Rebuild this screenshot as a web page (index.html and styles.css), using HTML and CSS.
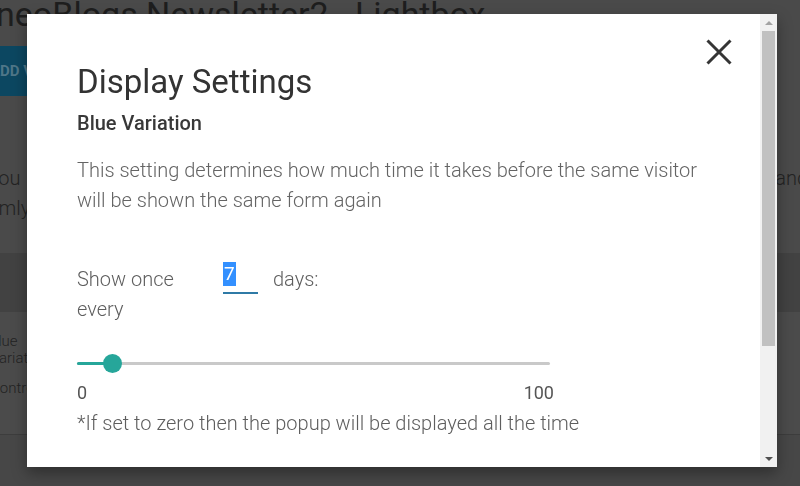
FILE: index.html
```html
<!DOCTYPE html>
<html>
<head>
<meta charset="utf-8">
<link rel="stylesheet" href="styles.css">
</head>
<body>
<div class="page">
  <header class="bg-header">
    <h1 class="bg-title">neoBlogs Newsletter2 - Lightbox</h1>
  </header>
  <div class="bg-toolbar">
    <span class="bg-button">ADD VARIATION</span>
  </div>
  <section class="bg-section">
    <p class="bg-line"><span class="bg-left">you</span><span class="bg-right">and</span></p>
    <p class="bg-line"><span class="bg-left2">firmly</span></p>
  </section>
  <div class="bg-thead"></div>
  <div class="bg-rows">
    <div class="bg-row"><span class="bg-cell c1">Blue</span><span class="bg-cell c2">Variation</span></div>
    <div class="bg-row r2"><span class="bg-cell c3">Control</span></div>
  </div>
</div>

<div class="modal">
  <div class="modal-content">
    <button class="close" aria-label="Close">
      <svg width="26" height="26" viewBox="0 0 26 26"><path d="M1.5 1.5 L24.5 24.5 M24.5 1.5 L1.5 24.5" stroke="#353535" stroke-width="3" fill="none"/></svg>
    </button>
    <h2 class="title">Display Settings</h2>
    <h4 class="subtitle">Blue Variation</h4>
    <p class="desc">This setting determines how much time it takes before the same visitor will be shown the same form again</p>
    <div class="freq-row">
      <label class="freq-label">Show once every</label>
      <div class="freq-input"><span class="sel">7</span></div>
      <span class="freq-unit">days:</span>
    </div>
    <div class="slider">
      <div class="track">
        <div class="fill" style="width:36px"></div>
        <div class="thumb"></div>
      </div>
    </div>
    <div class="range-labels"><span>0</span><span>100</span></div>
    <p class="note">*If set to zero then the popup will be displayed all the time</p>
  </div>
  <div class="scrollbar">
    <div class="sb-btn"><span class="arrow-up"></span></div>
    <div class="sb-thumb"></div>
    <div class="sb-space"></div>
    <div class="sb-btn"><span class="arrow-down"></span></div>
  </div>
</div>
</body>
</html>
```

FILE: styles.css
```css
html, body {
  margin: 0;
  padding: 0;
}
body {
  width: 800px;
  height: 486px;
  overflow: hidden;
  background: #474747;
  font-family: Roboto, "Noto Sans", sans-serif;
}
.page {
  width: 800px;
}
.bg-header {
  height: 46px;
  background: #4a4a4a;
  overflow: hidden;
}
.bg-title {
  margin: -3px 0 0 -4px;
  font-size: 34px;
  line-height: 34px;
  font-weight: 400;
  color: #1e1e1e;
  white-space: nowrap;
}
.bg-toolbar {
  height: 50px;
  background: #4a4a4a;
  overflow: hidden;
}
.bg-button {
  display: inline-flex;
  align-items: center;
  height: 50px;
  margin-left: -30px;
  padding: 0 20px;
  background: #0c4761;
  color: #4f7688;
  font-size: 15px;
  font-weight: 700;
}
.bg-section {
  height: 157px;
  box-sizing: border-box;
  padding-top: 67px;
  background: #4a4a4a;
  overflow: hidden;
}
.bg-line {
  margin: 0;
  display: flex;
  justify-content: space-between;
  font-size: 20px;
  font-weight: 300;
  line-height: 30px;
  color: #232323;
}
.bg-left { margin-left: -11px; }
.bg-left2 { margin-left: -19px; }
.bg-right { margin-right: -8px; }
.bg-thead {
  height: 59px;
  background: #424242;
}
.bg-rows {
  height: 123px;
  box-sizing: border-box;
  background: #4b4b4b;
  border-bottom: 1px solid #3d3d3d;
  padding-top: 21px;
  overflow: hidden;
}
.bg-row {
  display: flex;
  flex-direction: column;
  font-size: 15px;
  font-weight: 300;
  line-height: 17px;
  color: #232323;
}
.bg-row.r2 { margin-top: 13px; }
.c1 { margin-left: -11px; }
.c2 { margin-left: -10px; }
.c3 { margin-left: -10px; }

/* modal */
.modal {
  position: fixed;
  left: 27px;
  top: 14px;
  width: 750px;
  height: 453px;
  background: #fff;
  display: flex;
  box-shadow: 0 6px 14px rgba(0, 0, 0, 0.35);
}
.modal-content {
  position: relative;
  flex: 1;
  padding: 48px 50px 0 50px;
  box-sizing: border-box;
  overflow: hidden;
}
.close {
  position: absolute;
  top: 25px;
  right: 28px;
  width: 26px;
  height: 26px;
  padding: 0;
  border: 0;
  background: none;
  display: flex;
}
.title {
  margin: 0;
  font-size: 33px;
  line-height: 40px;
  font-weight: 400;
  color: #333;
}
.subtitle {
  margin: 9px 0 0;
  font-size: 20px;
  line-height: 24px;
  font-weight: 500;
  color: #383838;
}
.desc {
  margin: 20px 0 0;
  font-size: 20px;
  line-height: 30px;
  font-weight: 300;
  color: #646464;
}
.freq-row {
  display: flex;
  align-items: flex-start;
  margin-top: 49px;
  height: 60px;
  font-size: 20px;
  line-height: 30px;
  font-weight: 300;
  color: #5e5e5e;
}
.freq-label {
  width: 130px;
}
.freq-input {
  width: 35px;
  height: 31px;
  margin: -3px 0 0 16px;
  border-bottom: 2px solid #2f7aa6;
  line-height: 24px;
}
.sel {
  display: inline-block;
  padding: 0 1px;
  background: #3390ff;
  color: #fff;
  font-weight: 400;
  font-size: 19px;
  line-height: 24px;
}
.freq-unit {
  margin-left: 15px;
}
.slider {
  margin-top: 29px;
  width: 473px;
  height: 20px;
  display: flex;
  align-items: center;
}
.track {
  position: relative;
  width: 100%;
  height: 3px;
  background: #c9c9c9;
  border-radius: 2px;
}
.fill {
  height: 100%;
  background: #26a69a;
  border-radius: 2px 0 0 2px;
}
.thumb {
  position: absolute;
  left: 26px;
  top: -8px;
  width: 19px;
  height: 19px;
  border-radius: 50%;
  background: #26a69a;
}
.range-labels {
  margin-top: 8px;
  width: 477px;
  display: flex;
  justify-content: space-between;
  font-size: 18px;
  line-height: 24px;
  font-weight: 400;
  color: #555;
}
.note {
  margin: 5px 0 0;
  font-size: 20px;
  line-height: 26px;
  font-weight: 300;
  color: #5e5e5e;
}

/* scrollbar */
.scrollbar {
  width: 17px;
  background: #f1f1f1;
  display: flex;
  flex-direction: column;
}
.sb-btn {
  height: 17px;
  display: flex;
  align-items: center;
  justify-content: center;
}
.arrow-up {
  width: 0;
  height: 0;
  border-left: 4px solid transparent;
  border-right: 4px solid transparent;
  border-bottom: 4px solid #a3a3a3;
}
.arrow-down {
  width: 0;
  height: 0;
  border-left: 4px solid transparent;
  border-right: 4px solid transparent;
  border-top: 4px solid #505050;
}
.sb-thumb {
  height: 315px;
  margin: 0 2px;
  background: #c1c1c1;
}
.sb-space {
  flex: 1;
}
```
